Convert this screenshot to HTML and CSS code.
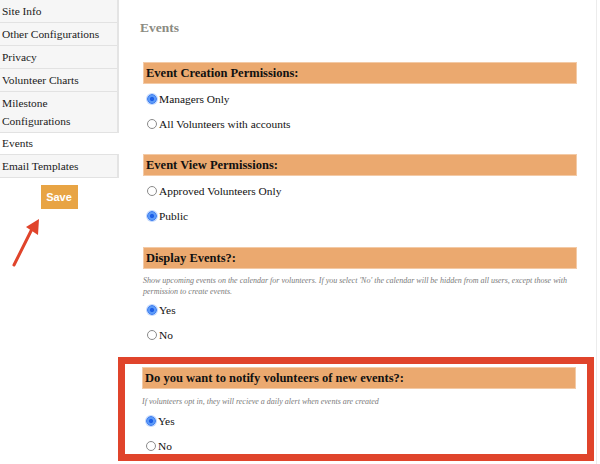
FILE: index.html
```html
<!DOCTYPE html>
<html>
<head>
<meta charset="utf-8">
<link rel="stylesheet" href="styles.css">
</head>
<body>
<div class="page">
  <aside class="sidebar">
    <ul class="nav nav-top">
      <li>Site Info</li>
      <li>Other Configurations</li>
      <li>Privacy</li>
      <li>Volunteer Charts</li>
      <li class="two">Milestone Configurations</li>
    </ul>
    <div class="nav-active">Events</div>
    <ul class="nav nav-bottom">
      <li>Email Templates</li>
    </ul>
    <div class="save-wrap"><button class="save">Save</button></div>
    <svg class="arrow" width="40" height="60" viewBox="0 0 40 60">
      <line x1="3" y1="50" x2="22" y2="12" stroke="#e0442b" stroke-width="3" stroke-linecap="round"/>
      <polygon points="28,4 15,12 27,20" fill="#e0442b"/>
    </svg>
  </aside>
  <main class="main">
    <h2 class="title">Events</h2>

    <section class="section s1">
      <div class="bar">Event Creation Permissions:</div>
      <div class="options">
        <label class="opt"><span class="radio checked"></span>Managers Only</label>
        <label class="opt"><span class="radio"></span>All Volunteers with accounts</label>
      </div>
    </section>

    <section class="section s2">
      <div class="bar">Event View Permissions:</div>
      <div class="options">
        <label class="opt"><span class="radio"></span>Approved Volunteers Only</label>
        <label class="opt"><span class="radio checked"></span>Public</label>
      </div>
    </section>

    <section class="section s3">
      <div class="bar">Display Events?:</div>
      <p class="desc">Show upcoming events on the calendar for volunteers. If you select 'No' the calendar will be hidden from all users, except those with permission to create events.</p>
      <div class="options tight">
        <label class="opt"><span class="radio checked"></span>Yes</label>
        <label class="opt"><span class="radio"></span>No</label>
      </div>
    </section>

    <div class="highlight">
      <section class="section s4">
        <div class="bar">Do you want to notify volunteers of new events?:</div>
        <p class="desc">If volunteers opt in, they will recieve a daily alert when events are created</p>
        <div class="options tight">
          <label class="opt"><span class="radio checked"></span>Yes</label>
          <label class="opt"><span class="radio"></span>No</label>
        </div>
      </section>
    </div>
  </main>
</div>
</body>
</html>
```

FILE: styles.css
```css
* { box-sizing: border-box; }
html, body {
  margin: 0;
  padding: 0;
  background: #fff;
}
body {
  width: 600px;
  height: 464px;
  overflow: hidden;
  font-family: "Liberation Serif", "Times New Roman", serif;
  color: #1a1a1a;
}
.page {
  display: grid;
  grid-template-columns: 119px 478px;
  height: 464px;
}
.sidebar {
  position: relative;
}
.nav {
  list-style: none;
  margin: 0;
  padding: 0;
  background: #f6f6f6;
  border-right: 2px solid #e4e4e4;
}
.nav li {
  font-size: 11.4px;
  line-height: 23px;
  height: 23px;
  padding: 0 2px;
  border-bottom: 1px solid #e2e2e2;
}
.nav li.two {
  height: 41px;
  line-height: 18px;
  padding-top: 2px;
}
.nav-active {
  font-size: 11.4px;
  line-height: 21px;
  padding: 0 2px;
  height: 21px;
  background: #fff;
}
.nav-bottom {
  border-top: 1px solid #e2e2e2;
}
.save-wrap {
  display: flex;
  justify-content: center;
  padding-top: 7px;
  padding-right: 1px;
}
.save {
  width: 37px;
  height: 24px;
  border: 0;
  background: #e8a444;
  color: #fff;
  font-family: "Liberation Sans", Arial, sans-serif;
  font-weight: bold;
  font-size: 11px;
  padding: 0;
}
.arrow {
  position: absolute;
  left: 11px;
  top: 215px;
}
.main {
  border-right: 1px solid #ececec;
  padding: 0 0 0 24px;
}
.title {
  margin: 20px 0 0 -3px;
  font-size: 13.5px;
  line-height: 16px;
  font-weight: bold;
  color: #8b8b82;
  height: 42px;
}
.section {
  width: 434px;
}
.bar {
  height: 22px;
  line-height: 21px;
  background: #eba96f;
  border: 1px solid #f3caa6;
  padding: 0 2px;
  font-size: 12.5px;
  font-weight: bold;
  color: #111;
}
.options {
  padding-top: 2px;
  padding-bottom: 18px;
  display: flex;
  flex-direction: column;
}
.s2 .options { padding-bottom: 19px; }
.options.tight {
  padding-top: 0;
  padding-bottom: 0;
}
.opt {
  display: flex;
  align-items: center;
  height: 25px;
  padding-left: 4px;
  font-size: 11.4px;
  color: #111;
}
.tight .opt:nth-child(2) { height: 26px; }
.radio {
  width: 10px;
  height: 10px;
  border-radius: 50%;
  border: 1px solid #8a8a8a;
  background: #fff;
  margin-right: 2px;
  flex: none;
}
.radio.checked {
  border: 1px solid #3a7bf0;
  background: radial-gradient(circle, #1d5fe6 0 1.6px, #5e9bf8 2.6px);
  box-shadow: 0 0 0 1px #c5dafd;
}
.desc {
  margin: 6px 0 0 0;
  font-size: 8px;
  line-height: 11px;
  font-style: italic;
  color: #7a7a7a;
}
.highlight {
  margin: 9px 0 0 -25px;
  width: 476px;
  border: 7px solid #e0442b;
  padding: 3px 10px 0 17px;
  height: 104px;
}
.s4 .desc { margin-top: 7px; }
.s4 .options { padding-top: 1px; }
```
